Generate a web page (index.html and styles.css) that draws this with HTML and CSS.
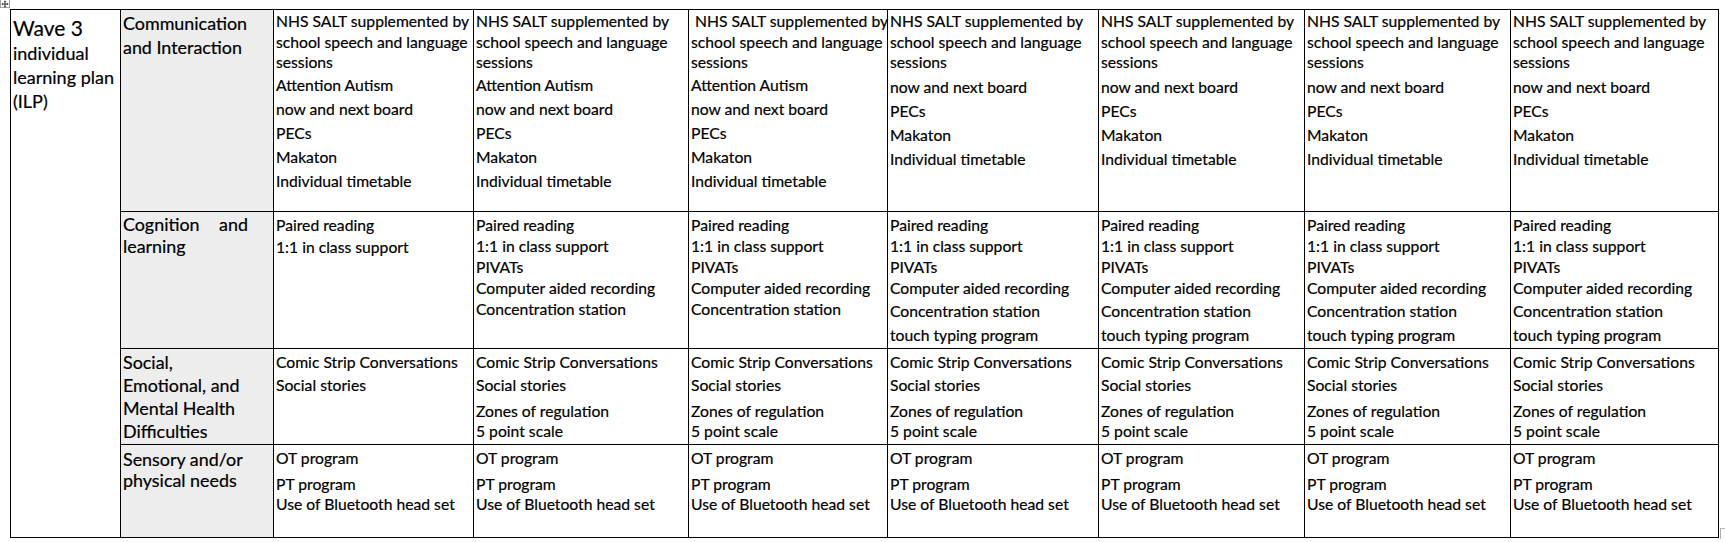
FILE: index.html
```html
<!DOCTYPE html>
<html lang="en">
<head>
<meta charset="utf-8">
<title>Wave 3 individual learning plan</title>
<link rel="stylesheet" href="styles.css">
</head>
<body>
<div class="move-handle"><svg width="10" height="8" viewBox="0 0 10 8"><rect x="0.5" y="-0.5" width="9" height="8" fill="#fff" stroke="#a0a0a0"/><path d="M5 1v6M2 4h6" stroke="#333" stroke-width="1"/><path d="M4 2l1-1.2 1 1.2M4 6l1 1.2 1-1.2M3 3l-1.2 1 1.2 1M7 3l1.2 1-1.2 1" stroke="#333" stroke-width="0.8" fill="none"/></svg></div>
<div class="page">
<table class="ilp">
<colgroup>
<col class="c1"><col class="c2"><col class="c3"><col class="c4"><col class="c5"><col class="c6"><col class="c7"><col class="c8"><col class="c9">
</colgroup>
<tr class="r1">
<td rowspan="4" class="wave"><div class="w-title">Wave 3</div><div class="w-line">individual</div><div class="w-line">learning plan</div><div class="w-line">(ILP)</div></td>
<td class="area"><div class="a-box a1"><div class="a24">Communication</div><div class="a24">and Interaction</div></div></td>
<td class="cell r1c"><div class="para">NHS SALT supplemented by<br>school speech and language<br>sessions</div><div class="l24">Attention Autism</div><div class="l24">now and next board</div><div class="l24">PECs</div><div class="l24">Makaton</div><div class="l24">Individual timetable</div></td>
<td class="cell r1c"><div class="para">NHS SALT supplemented by<br>school speech and language<br>sessions</div><div class="l24">Attention Autism</div><div class="l24">now and next board</div><div class="l24">PECs</div><div class="l24">Makaton</div><div class="l24">Individual timetable</div></td>
<td class="cell r1c"><div class="para">&nbsp;NHS SALT supplemented by<br>school speech and language<br>sessions</div><div class="l24">Attention Autism</div><div class="l24">now and next board</div><div class="l24">PECs</div><div class="l24">Makaton</div><div class="l24">Individual timetable</div></td>
<td class="cell r1c"><div class="para">NHS SALT supplemented by<br>school speech and language<br>sessions</div><div class="l24 shift">now and next board</div><div class="l24">PECs</div><div class="l24">Makaton</div><div class="l24">Individual timetable</div></td>
<td class="cell r1c"><div class="para">NHS SALT supplemented by<br>school speech and language<br>sessions</div><div class="l24 shift">now and next board</div><div class="l24">PECs</div><div class="l24">Makaton</div><div class="l24">Individual timetable</div></td>
<td class="cell r1c"><div class="para">NHS SALT supplemented by<br>school speech and language<br>sessions</div><div class="l24 shift">now and next board</div><div class="l24">PECs</div><div class="l24">Makaton</div><div class="l24">Individual timetable</div></td>
<td class="cell r1c"><div class="para">NHS SALT supplemented by<br>school speech and language<br>sessions</div><div class="l24 shift">now and next board</div><div class="l24">PECs</div><div class="l24">Makaton</div><div class="l24">Individual timetable</div></td>
</tr>
<tr class="r2">
<td class="area"><div class="a-box a2"><div class="justify">Cognition and learning</div></div></td>
<td class="cell r2c"><div class="l21">Paired reading</div><div class="l22">1:1 in class support</div></td>
<td class="cell r2c"><div class="l21">Paired reading</div><div class="l21">1:1 in class support</div><div class="l21">PIVATs</div><div class="l21">Computer aided recording</div><div class="l21">Concentration station</div></td>
<td class="cell r2c"><div class="l21">Paired reading</div><div class="l21">1:1 in class support</div><div class="l21">PIVATs</div><div class="l21">Computer aided recording</div><div class="l21">Concentration station</div></td>
<td class="cell r2c"><div class="l21">Paired reading</div><div class="l21">1:1 in class support</div><div class="l21">PIVATs</div><div class="l21">Computer aided recording</div><div class="l24">Concentration station</div><div class="l24">touch typing program</div></td>
<td class="cell r2c"><div class="l21">Paired reading</div><div class="l21">1:1 in class support</div><div class="l21">PIVATs</div><div class="l21">Computer aided recording</div><div class="l24">Concentration station</div><div class="l24">touch typing program</div></td>
<td class="cell r2c"><div class="l21">Paired reading</div><div class="l21">1:1 in class support</div><div class="l21">PIVATs</div><div class="l21">Computer aided recording</div><div class="l24">Concentration station</div><div class="l24">touch typing program</div></td>
<td class="cell r2c"><div class="l21">Paired reading</div><div class="l21">1:1 in class support</div><div class="l21">PIVATs</div><div class="l21">Computer aided recording</div><div class="l24">Concentration station</div><div class="l24">touch typing program</div></td>
</tr>
<tr class="r3">
<td class="area"><div class="a-box a3"><div class="a23">Social,</div><div class="a23">Emotional, and</div><div class="a23">Mental Health</div><div class="a23">Difficulties</div></div></td>
<td class="cell r3c"><div class="l23">Comic Strip Conversations</div><div class="l23">Social stories</div></td>
<td class="cell r3c"><div class="l23">Comic Strip Conversations</div><div class="l23">Social stories</div><div class="l20 gap">Zones of regulation</div><div class="l20">5 point scale</div></td>
<td class="cell r3c"><div class="l23">Comic Strip Conversations</div><div class="l23">Social stories</div><div class="l20 gap">Zones of regulation</div><div class="l20">5 point scale</div></td>
<td class="cell r3c"><div class="l23">Comic Strip Conversations</div><div class="l23">Social stories</div><div class="l20 gap">Zones of regulation</div><div class="l20">5 point scale</div></td>
<td class="cell r3c"><div class="l23">Comic Strip Conversations</div><div class="l23">Social stories</div><div class="l20 gap">Zones of regulation</div><div class="l20">5 point scale</div></td>
<td class="cell r3c"><div class="l23">Comic Strip Conversations</div><div class="l23">Social stories</div><div class="l20 gap">Zones of regulation</div><div class="l20">5 point scale</div></td>
<td class="cell r3c"><div class="l23">Comic Strip Conversations</div><div class="l23">Social stories</div><div class="l20 gap">Zones of regulation</div><div class="l20">5 point scale</div></td>
</tr>
<tr class="r4">
<td class="area"><div class="a-box a4"><div class="a21">Sensory and/or</div><div class="a21">physical needs</div></div></td>
<td class="cell r4c"><div class="l23">OT program</div><div class="l20 gap">PT program</div><div class="l20">Use of Bluetooth head set</div></td>
<td class="cell r4c"><div class="l23">OT program</div><div class="l20 gap">PT program</div><div class="l20">Use of Bluetooth head set</div></td>
<td class="cell r4c"><div class="l23">OT program</div><div class="l20 gap">PT program</div><div class="l20">Use of Bluetooth head set</div></td>
<td class="cell r4c"><div class="l23">OT program</div><div class="l20 gap">PT program</div><div class="l20">Use of Bluetooth head set</div></td>
<td class="cell r4c"><div class="l23">OT program</div><div class="l20 gap">PT program</div><div class="l20">Use of Bluetooth head set</div></td>
<td class="cell r4c"><div class="l23">OT program</div><div class="l20 gap">PT program</div><div class="l20">Use of Bluetooth head set</div></td>
<td class="cell r4c"><div class="l23">OT program</div><div class="l20 gap">PT program</div><div class="l20">Use of Bluetooth head set</div></td>
</tr>
</table>
</div>
<div class="resize-handle"></div>
</body>
</html>
```
FILE: styles.css
```css
html, body {
  margin: 0;
  padding: 0;
  background: #fff;
}
body {
  font-family: Lato, "Liberation Sans", sans-serif;
  color: #000;
  width: 1725px;
  height: 542px;
  overflow: hidden;
  position: relative;
  -webkit-text-stroke: 0.2px #000;
}
.page {
  padding: 9px 0 0 10px;
}
.move-handle {
  position: absolute;
  left: 0;
  top: 0;
  width: 10px;
  height: 8px;
  line-height: 0;
}
.resize-handle {
  position: absolute;
  left: 1720px;
  top: 528px;
  width: 6px;
  height: 10px;
  border-top: 1px solid #b0b0b0;
  border-left: 1px solid #b0b0b0;
}
.ilp {
  border-collapse: collapse;
  table-layout: fixed;
  width: 1709px;
}
.c1 { width: 110px; }
.c2 { width: 153px; }
.c3 { width: 200px; }
.c4 { width: 215px; }
.c5 { width: 199px; }
.c6 { width: 211px; }
.c7 { width: 206px; }
.c8 { width: 206px; }
.c9 { width: 208px; }
.r1 { height: 202px; }
.r2 { height: 137px; }
.r3 { height: 96px; }
.r4 { height: 93px; }
.ilp td {
  border: 1px solid #000;
  vertical-align: top;
  padding: 0 0 0 2px;
  white-space: nowrap;
  overflow: visible;
}
.wave {
  font-size: 18px;
  padding-top: 1px !important;
}
.w-title {
  font-size: 21px;
  line-height: 26px;
  padding-top: 3.5px;
}
.w-line {
  line-height: 24px;
}
.ilp td.area {
  background: #ededed;
  font-size: 17.9px;
}
.a-box {
  width: 125px;
}
.a1 { padding-top: 1px; }
.a2 { padding-top: 1px; }
.a3 { padding-top: 2px; }
.a4 { padding-top: 4px; }
.a24 { line-height: 24px; }
.a23 { line-height: 23px; }
.a21 { line-height: 21px; }
.justify {
  white-space: normal;
  text-align: justify;
  line-height: 22px;
}
.cell {
  font-size: 15.7px;
}
.r1c { padding-top: 1px !important; }
.r2c { padding-top: 3px !important; }
.r3c, .r4c { padding-top: 2px !important; }
.para { line-height: 20.5px; }
.l24 { line-height: 24px; }
.l23 { line-height: 23px; }
.l22 { line-height: 22px; }
.l21 { line-height: 21px; }
.l20 { line-height: 20px; }
.gap { margin-top: 4px; }
.shift { margin-top: 2px; }
```
